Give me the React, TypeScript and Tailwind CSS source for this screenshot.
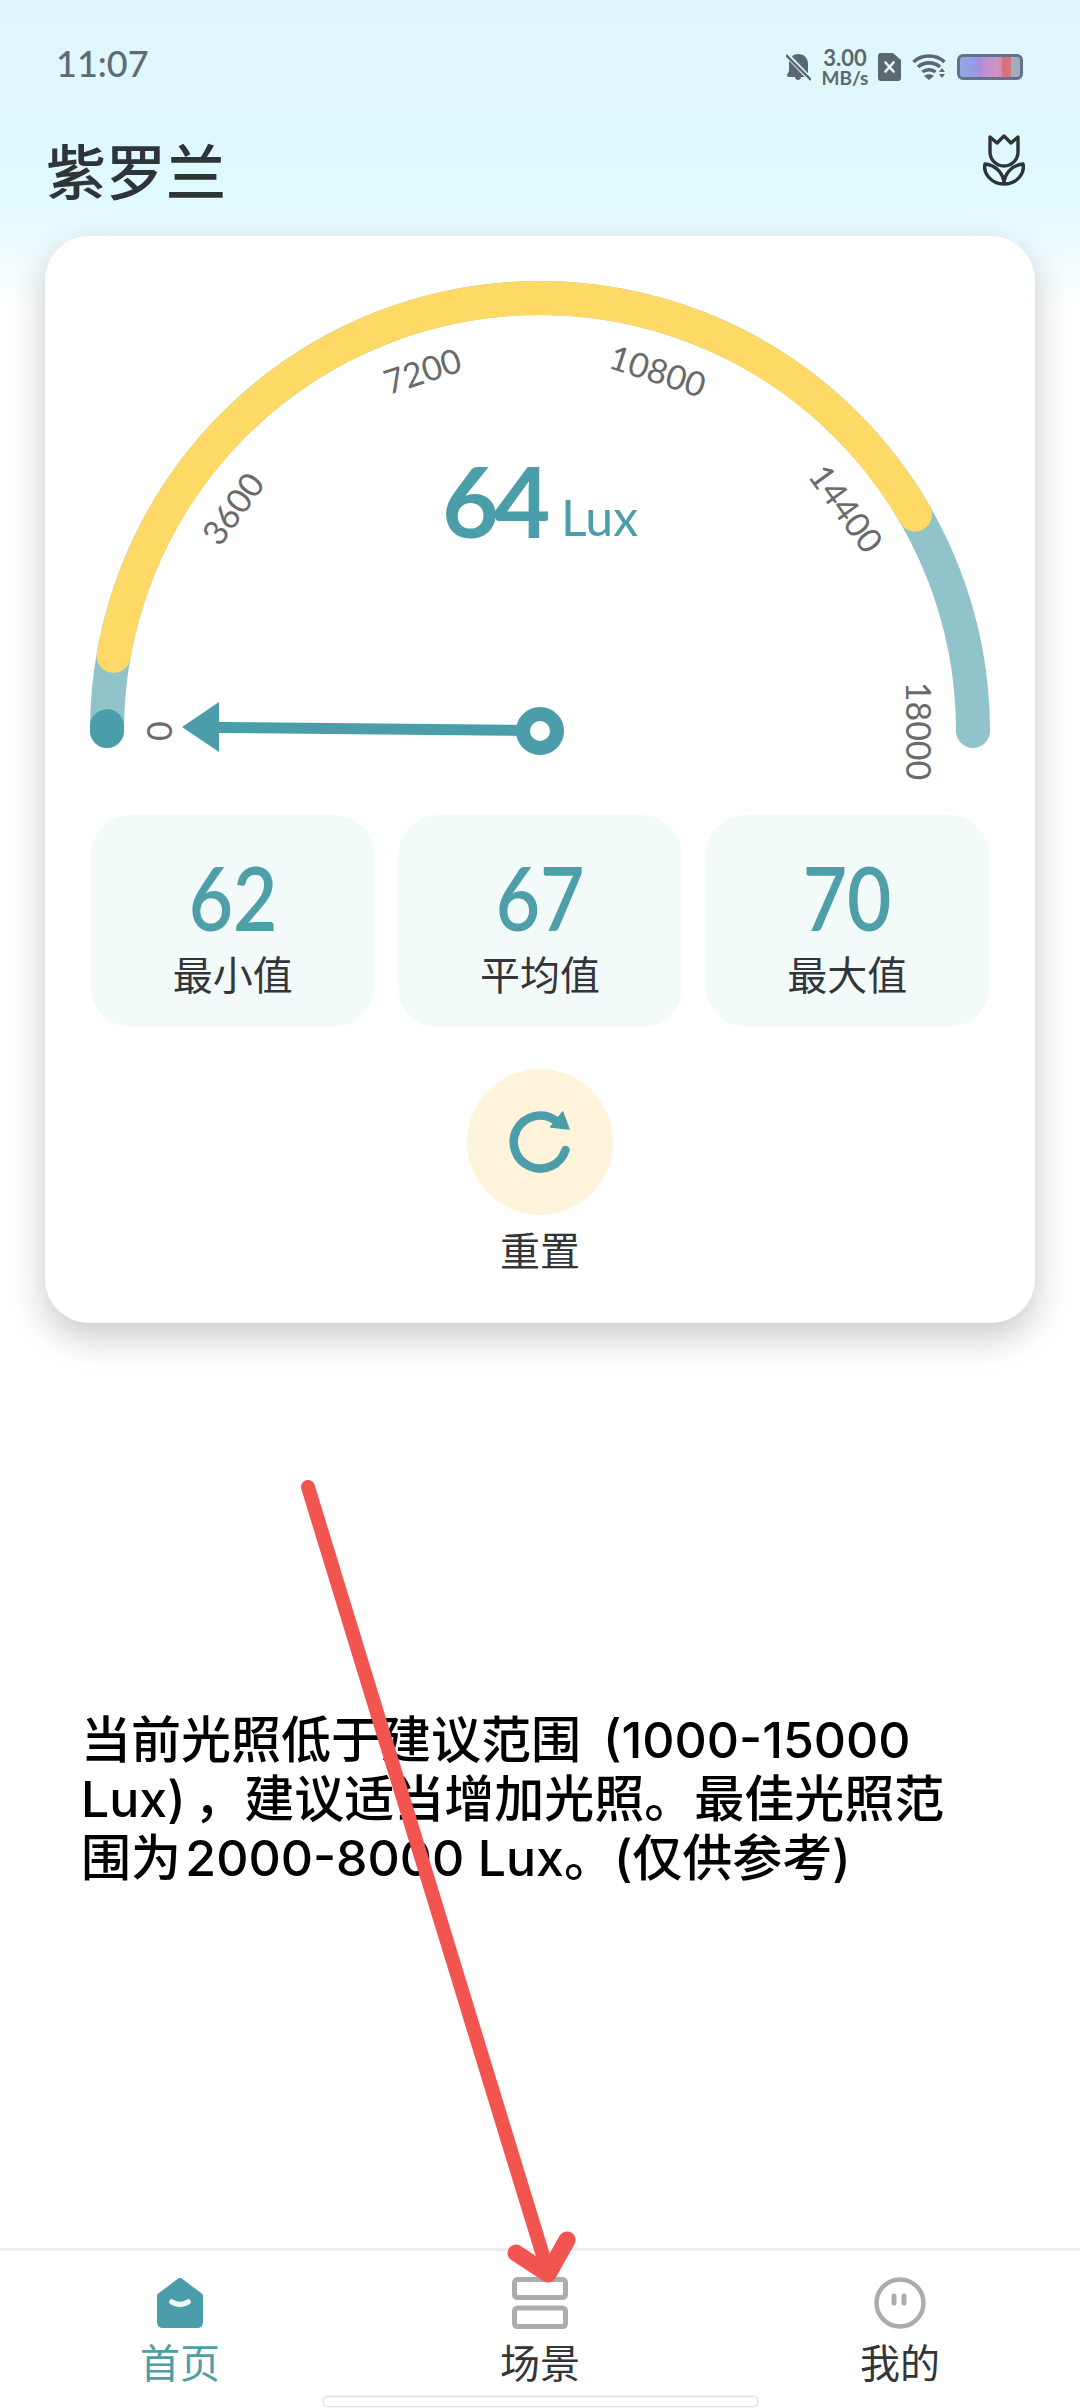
const CJK = 'font-["Lato","Noto_Sans_CJK_SC",sans-serif]';

function polar(a: number, r = 433) {
  const t = (a * Math.PI) / 180;
  return [540 + r * Math.cos(t), 731 - r * Math.sin(t)];
}
function arc(from: number, to: number) {
  const [x1, y1] = polar(from);
  const [x2, y2] = polar(to);
  return `M${x1} ${y1} A433 433 0 ${from - to > 180 ? 1 : 0} 1 ${x2} ${y2}`;
}

const ticks = [
  { v: "0", x: 158, y: 731, r: -90 },
  { v: "3600", x: 232, y: 508, r: -54 },
  { v: "7200", x: 422, y: 370, r: -18 },
  { v: "10800", x: 658, y: 370, r: 18 },
  { v: "14400", x: 847, y: 508, r: 54 },
  { v: "18000", x: 919, y: 731, r: 90 },
];

function Gauge() {
  return (
    <svg viewBox="45 236 990 579" className="block w-[990px] h-[579px] shrink-0">
      <path d={arc(180, 0)} fill="none" stroke="#90c3ca" strokeWidth="34" strokeLinecap="round" />
      <path d={arc(170, 30)} fill="none" stroke="#fed966" strokeWidth="34" strokeLinecap="round" />
      <path d={arc(180, 179.36)} fill="none" stroke="#4b9ea9" strokeWidth="34" strokeLinecap="round" />
      {ticks.map((t) => (
        <text
          key={t.v}
          x={t.x}
          y={t.y}
          transform={`rotate(${t.r} ${t.x} ${t.y})`}
          textAnchor="middle"
          dominantBaseline="central"
          fill="#6a6a6a"
          fontSize="34"
          fontWeight="400"
          fontFamily="Lato, sans-serif"
        >
          {t.v}
        </text>
      ))}
      <text x="442" y="538" fill="#4b9ea9" fontSize="98" fontWeight="700" letterSpacing="-5" fontFamily="Lato, sans-serif">64</text>
      <text x="561" y="536" fill="#4b9ea9" fontSize="50" fontWeight="400" fontFamily="Lato, sans-serif">Lux</text>
      <path d="M182 727 L219 702 L219 722 L525 725 L525 736 L219 733 L219 752 Z" fill="#4b9ea9" />
      <circle cx="540" cy="731" r="17" fill="#fff" stroke="#4b9ea9" strokeWidth="14" />
    </svg>
  );
}

function Stat({ value, label }: { value: string; label: string }) {
  return (
    <div className="flex-1 h-[212px] rounded-[40px] bg-[#f3fafa] flex flex-col items-center pt-[40px]">
      <div className="text-[88px] leading-[84px] font-semibold text-[#4f9fa9] scale-x-[0.87]">{value}</div>
      <div className="text-[40px] leading-[44px] mt-[14px] text-[#333639]">{label}</div>
    </div>
  );
}

function Flower() {
  return (
    <svg viewBox="0 0 44 53" className="w-[44px] h-[53px]" fill="none" stroke="#2f3437" strokeWidth="3.4" strokeLinejoin="round" strokeLinecap="round">
      <path d="M8 3 L15 9 L22 2 L29 9 L36 3 L36 18 A14 14 0 0 1 8 18 Z" />
      <path d="M22 50 C22 40 14 31 3 30 C1 38 8 50 22 50 C36 50 43 38 41 30 C30 31 22 40 22 50 Z" />
    </svg>
  );
}

function StatusIcons() {
  return (
    <div className="flex items-center">
      <svg viewBox="0 0 25 28" className="w-[25px] h-[28px]">
        <path d="M12 1 C18 1 22 5 22 11 L22 22 L24 24 L3 24 C2 24 1 23 1 22 L3 18 L3 10 C3 5 7 1 12 1 Z" fill="#5b686d" />
        <path d="M9 24 C9 28 15 28 15 24 Z" fill="#5b686d" />
        <path d="M0 1 L25 27" stroke="#dff6fc" strokeWidth="5" />
        <path d="M0 2 L25 27" stroke="#5b686d" strokeWidth="2.4" />
      </svg>
      <div className="ml-[12px] w-[44px] flex flex-col items-center font-['Lato',sans-serif] font-bold text-[#5b686d]">
        <div className="text-[22px] leading-[22px]">3.00</div>
        <div className="text-[19px] leading-[18px]">MB/s</div>
      </div>
      <svg viewBox="0 0 23 28" className="ml-[11px] w-[23px] h-[28px]">
        <path d="M3 0 L15 0 L23 7 L23 25 A3 3 0 0 1 20 28 L3 28 A3 3 0 0 1 0 25 L0 3 A3 3 0 0 1 3 0 Z" fill="#5b686d" />
        <path d="M7.5 9.5 L15.5 18.5 M15.5 9.5 L7.5 18.5" stroke="#eef8fb" strokeWidth="2.6" strokeLinecap="round" />
      </svg>
      <svg viewBox="0 0 34 26" className="ml-[11px] w-[34px] h-[26px]">
        <g fill="none" stroke="#5b686d" strokeWidth="3.6">
          <path d="M1.5 8 C10 0 24 0 32.5 8" />
          <path d="M6 13 C12 7.5 22 7.5 28 13" />
          <path d="M10.5 18 C14 15 20 15 23.5 18" />
        </g>
        <path d="M12 22 C15 19.5 19 19.5 22 22 L17 26 Z" fill="#5b686d" />
        <path d="M30 14 L33 18 L27 18 Z M27 20 L33 20 L30 24 Z" fill="#5b686d" />
      </svg>
      <div className="ml-[11px] w-[66px] h-[26px] rounded-[6px] border-[3px] border-[#63728a] bg-[linear-gradient(90deg,#93a7e0_0%,#9a98ea_26%,#a98cdc_32%,#bb90d2_40%,#cf94c6_60%,#d08cbc_68%,#d86e78_72%,#d8727a_84%,#a0aebc_86%,#a0aebc_100%)]" />
    </div>
  );
}

function NavItem({ label, active, children }: { label: string; active?: boolean; children: React.ReactNode }) {
  return (
    <div className="flex-1 flex flex-col items-center">
      <div className="h-[54px] flex items-center justify-center">{children}</div>
      <div className={`mt-[10px] text-[40px] leading-[46px] ${active ? "text-[#4f9da7]" : "text-[#333639]"}`}>{label}</div>
    </div>
  );
}

export default function App() {
  return (
    <div className={`relative w-[1080px] h-[2408px] overflow-hidden flex flex-col bg-white ${CJK}`}>
      <div className="absolute left-0 top-0 w-full h-[310px] bg-[linear-gradient(180deg,#dff5fb_0%,#dff9ff_62%,#ffffff_100%)]" />
      <div className="relative h-[130px] shrink-0 pl-[56px] pr-[57px] pt-[43px] flex items-start justify-between">
        <div className="text-[36px] leading-[40px] text-[#5f6b70] font-['Lato',sans-serif] font-medium">11:07</div>
        <div className="mt-[4px]"><StatusIcons /></div>
      </div>
      <div className="relative h-[106px] shrink-0 pl-[46px] pr-[54px] flex items-start justify-between">
        <div className="text-[60px] leading-[84px] font-medium text-[#2f3437]">紫罗兰</div>
        <div className="mt-[4px]"><Flower /></div>
      </div>
      <div className="relative mx-[45px] h-[1087px] shrink-0 rounded-[44px] bg-white shadow-[0_14px_36px_rgba(0,0,0,0.22)] flex flex-col items-center">
        <Gauge />
        <div className="w-full px-[46px] flex gap-[24px]">
          <Stat value="62" label="最小值" />
          <Stat value="67" label="平均值" />
          <Stat value="70" label="最大值" />
        </div>
        <div className="mt-[42px] w-[146px] h-[146px] rounded-full bg-[#fff3dc] flex items-center justify-center">
          <svg viewBox="0 0 62 64" className="w-[62px] h-[64px]" fill="none">
            <path d="M56.5 40 A26.5 26.5 0 1 1 46 10" stroke="#4b9ea9" strokeWidth="8.5" strokeLinecap="round" />
            <path d="M53.7 2 L60 19 L41.7 17 Z" fill="#4b9ea9" stroke="#4b9ea9" strokeWidth="1.5" strokeLinejoin="round" />
          </svg>
        </div>
        <div className="mt-[13px] text-[40px] leading-[46px] text-[#333639]">重置</div>
      </div>
      <div className="relative mt-[388px] pl-[81px] pr-[110px] text-[50px] leading-[59px] text-black font-['Inter','Noto_Sans_CJK_SC',sans-serif] font-medium">
        {"当前光照低于建议范围 \u2009(1000-15000 Lux)\u2009，建议适当增加光照。最佳光照范围为\u200A2000-8000 Lux。(仅供参考)"}
      </div>
      <div className="absolute left-0 bottom-0 w-full h-[160px] border-t-[3px] border-[#eeeeee] bg-white pt-[25px] flex">
        <NavItem label="首页" active>
          <svg viewBox="0 0 46 50" className="w-[46px] h-[50px]">
            <path d="M23 3 L43 18 L43 44 Q43 47 40 47 L6 47 Q3 47 3 44 L3 18 Z" fill="#4b9ea9" stroke="#4b9ea9" strokeWidth="6" strokeLinejoin="round" />
            <path d="M15 24 Q23 29 31 24" fill="none" stroke="#eef7f8" strokeWidth="5.5" strokeLinecap="round" />
          </svg>
        </NavItem>
        <NavItem label="场景">
          <svg viewBox="0 0 56 52" className="w-[56px] h-[52px]" fill="none" stroke="#acacac" strokeWidth="5">
            <rect x="2.5" y="2.5" width="51" height="18" rx="3" />
            <rect x="2.5" y="31" width="51" height="18.5" rx="3" />
          </svg>
        </NavItem>
        <NavItem label="我的">
          <svg viewBox="0 0 52 52" className="w-[52px] h-[52px]" fill="none" stroke="#acacac">
            <circle cx="26" cy="26" r="23.5" strokeWidth="4.5" />
            <path d="M20 19 L20 26 M30 19 L30 26" strokeWidth="5" strokeLinecap="round" />
          </svg>
        </NavItem>
        <div className="absolute left-[324px] bottom-[2px] w-[433px] h-[9px] rounded-[4px] bg-white shadow-[0_0_3px_rgba(0,0,0,0.35)]" />
      </div>
      <svg className="absolute left-0 top-0 w-[1080px] h-[2408px] pointer-events-none" viewBox="0 0 1080 2408" fill="none">
        <path d="M308 1487 L548 2272" stroke="#f2544f" strokeWidth="14" strokeLinecap="round" />
        <path d="M516 2253 L548 2274 L567 2240" stroke="#f2544f" strokeWidth="17" strokeLinecap="round" strokeLinejoin="round" />
      </svg>
    </div>
  );
}
